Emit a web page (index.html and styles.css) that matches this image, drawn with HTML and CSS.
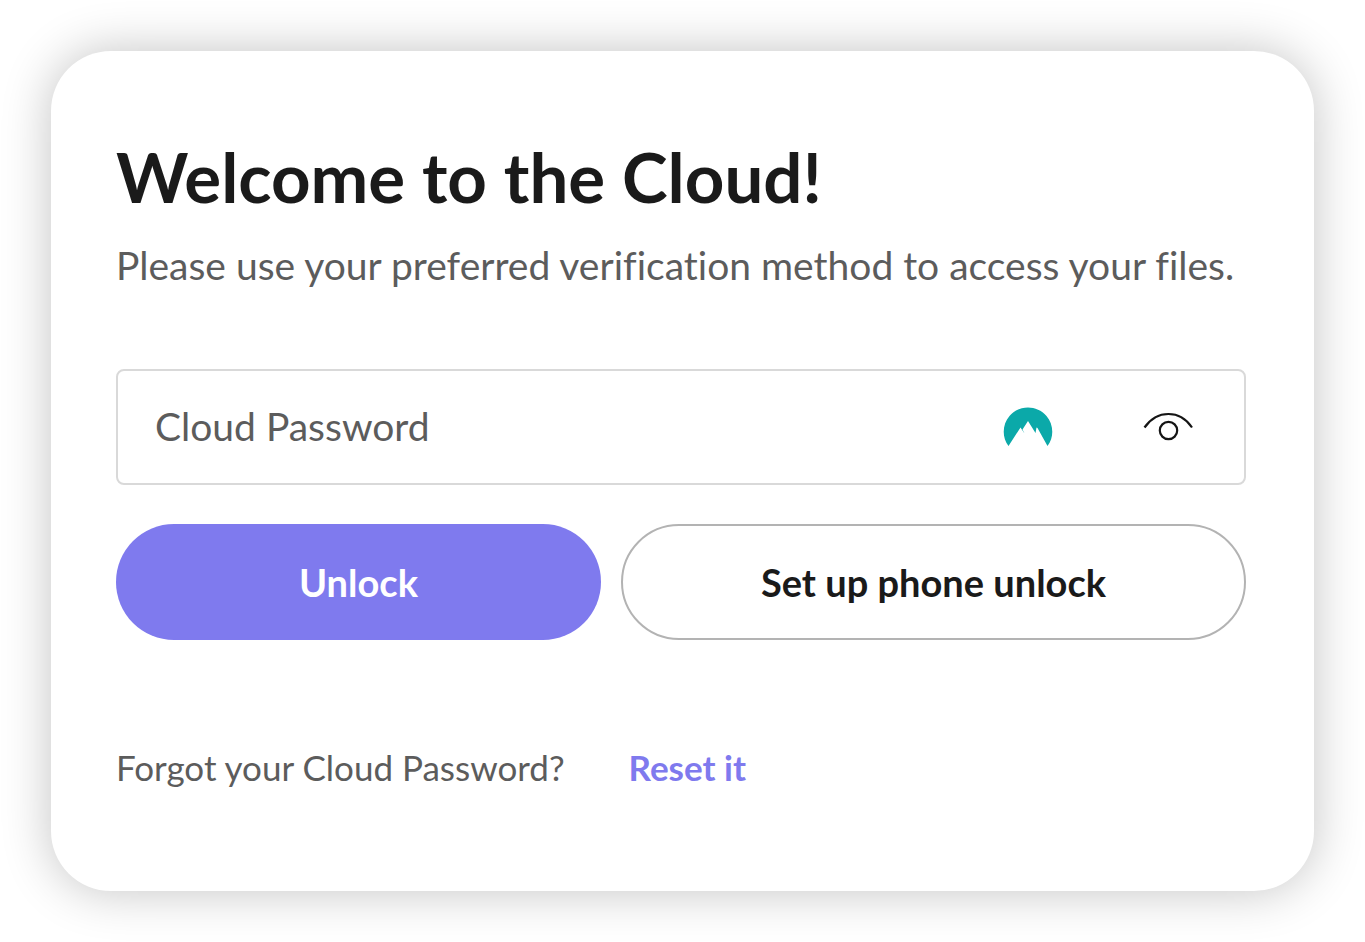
FILE: index.html
```html
<!DOCTYPE html>
<html lang="en">
  <head>
    <meta charset="utf-8">
    <meta name="viewport" content="width=device-width, initial-scale=1.0">
    <title>Cloud</title>
    <link rel="stylesheet" href="styles.css">
  </head>
  <body>
    <main class="card">
      <h1>Welcome to the Cloud!</h1>
      <p class="intro">Please use your preferred verification method to access your files.</p>

      <form class="unlock-form">
        <div class="field">
          <input class="password" type="password" name="password" aria-label="Cloud Password" placeholder="Cloud Password">
          <button class="icon-button" type="button" aria-label="Fill from password manager">
            <svg width="50" height="40" viewBox="0 0 50 40">
              <path fill="#0ba9a9" d="M5.500 39C-1.500 30-.5 17 6.500 9C16-2.500 34-2.500 43.500 9C50.500 17 51.500 30 44.500 39L34.500 21L33.500 20.500L32.500 26L25 14L19.500 22.500L21.500 26.500L17.500 20.500Z"/>
            </svg>
          </button>
          <button class="icon-button" type="button" aria-label="Show password">
            <svg width="50" height="32" viewBox="0 0 50 32" fill="none" stroke="#151515" stroke-width="2.200">
              <path d="M1.500 16.500C14-1.500 37-1.500 49 16.500"/>
              <circle cx="25.500" cy="19.500" r="8.700"/>
            </svg>
          </button>
        </div>

        <div class="actions">
          <button class="button primary" type="submit">Unlock</button>
          <button class="button secondary" type="button">Set up phone unlock</button>
        </div>
      </form>

      <p class="forgot">Forgot your Cloud Password? <a href="#">Reset it</a></p>
    </main>
  </body>
</html>
```
FILE: styles.css
```css
* {
  margin: 0;
  padding: 0;
  box-sizing: border-box;
}

body {
  padding: 51px;
  background: #fff;
  font-family: Lato, sans-serif;
  font-variant-ligatures: none;
  color: #1a1a1a;
}

.card {
  padding: 86px 68px 102px 65px;
  border-radius: 60px;
  background: #fff;
  box-shadow: 0 0 50px rgba(0, 0, 0, 0.24);
}

h1 {
  font-size: 69px;
  line-height: 80px;
}

.intro {
  margin-top: 24px;
  font-size: 39px;
  line-height: 48px;
  color: #5c5c5c;
}

/* Password field */
.field {
  display: flex;
  align-items: center;
  gap: 90px;
  height: 116px;
  margin-top: 80px;
  padding: 0 51px 0 37px;
  border: 2px solid #d9d9d9;
  border-radius: 8px;
}

.password {
  flex: 1;
  min-width: 0;
  height: 100%;
  padding-bottom: 2px;
  border: none;
  outline: none;
  background: none;
  font: inherit;
  font-size: 39px;
}

.password::placeholder {
  color: #5c5c5c;
}

.icon-button {
  border: none;
  background: none;
  cursor: pointer;
}

.icon-button svg {
  display: block;
}

/* Buttons */
.actions {
  display: grid;
  grid-template-columns: 485fr 625fr;
  gap: 20px;
  margin-top: 39px;
}

.button {
  height: 116px;
  border-radius: 58px;
  font: inherit;
  font-size: 38px;
  font-weight: bold;
  cursor: pointer;
}

.primary {
  border: none;
  background: #7f7aee;
  color: #fff;
}

.secondary {
  border: 2px solid #b3b3b3;
  background: #fff;
  color: #1a1a1a;
}

.forgot {
  display: flex;
  flex-wrap: wrap;
  gap: 64px;
  margin-top: 105px;
  font-size: 35px;
  line-height: 44px;
  color: #5c5c5c;
}

.forgot a {
  color: #7f7aee;
  font-weight: bold;
  text-decoration: none;
}
```
